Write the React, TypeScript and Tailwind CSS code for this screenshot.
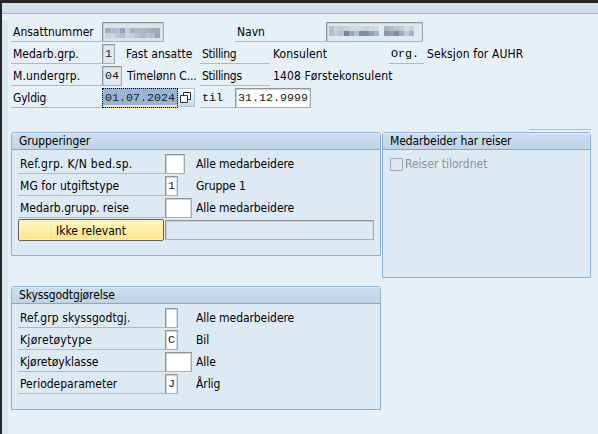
import React from 'react';

type Span = { text: string; className?: string };

const idMosaic = [
  ['#b3aaae', '#a9bbcd', '#b3c0d5', '#a29eb5', '#c1cfdb', '#b4acc2', '#a9bacb', '#b4b8b6', '#a5b3c3', '#9caabb', '#a3acbd'],
  ['#c8d4df', '#cbd8e3', '#bac9d7', '#b3bccd', '#c7d4e0', '#c3cfdc', '#b5c4d2', '#adb9c7', '#b8c4d2', '#b0bdcb', '#98a4b3'],
];

const nameMosaic = [
  ['#b7bcc9', '#c9d2dd', '#c0ccd9', '#c4d3e0', '#cdd9e5', '#cedbe6', '#ccd9e5', '#c3d1de', '#cbd7e1', '#ccdae5', '#dceaf4', '#b2b0bb', '#b2bccd', '#bec6d3', '#bfc9d7', '#d2dce6', '#c5d1e3'],
  ['#bbbfcc', '#c1cbd7', '#b6c1cd', '#7b8494', '#9ca9b5', '#b6bfca', '#7c8ba8', '#8b8c9b', '#929fb1', '#a8b4c1', '#dceaf4', '#948f99', '#929eaf', '#838b9b', '#a2aabb', '#c0ccd9', '#a5b1c7'],
];

function Mosaic({ rows }: { rows: string[][] }) {
  return (
    <div className="flex flex-col">
      {rows.map((row, i) => (
        <div key={i} className="flex">
          {row.map((color, j) => (
            <span key={j} className="w-[5px] h-[5px]" style={{ backgroundColor: color }} />
          ))}
        </div>
      ))}
    </div>
  );
}

function Label({ text, className = '' }: Span) {
  return (
    <div className={`h-[22px] shrink-0 border-b border-[#b4b8ba] pl-0.5 leading-[25px] whitespace-pre ${className}`}>
      <span>{text}</span>
    </div>
  );
}

function Field({ className = '', children }: { className?: string; children?: React.ReactNode }) {
  return (
    <div
      className={`h-5 shrink-0 self-end border border-t-[#929496] border-l-[#929496] border-r-[#a6a8aa] border-b-[#acaeb0] shadow-[inset_1px_1px_1px_#c9cdd1,inset_-1px_0_0_#dcdfe2] pl-0.5 font-['Liberation_Mono',monospace] text-[11.7px] leading-[19px] text-[#202020] ${className}`}
    >
      {children}
    </div>
  );
}

function Panel({ title, className = '', children }: { title: string; className?: string; children: React.ReactNode }) {
  return (
    <section className={`rounded-t-[3px] border border-[#8eb0d0] bg-[#deeaf3] ${className}`}>
      <h2 className="h-[17px] rounded-t-[2px] border-b border-[#86a8ca] bg-gradient-to-b from-[#cddeed] to-[#bed4e8] pl-[7px] leading-[16px] tracking-[-0.1px] shadow-[inset_0_1px_0_#e3eef7]">
        {title}
      </h2>
      {children}
    </section>
  );
}

type RowProps = { label: string; labelClass?: string; size: string; value?: string; text: string };

function PanelRow({ label, labelClass = '', size, value, text }: RowProps) {
  return (
    <div className="flex h-[22px] items-end">
      <Label text={label} className={`w-[147px] ${labelClass}`} />
      <div className="flex w-[31px] shrink-0">
        <Field className={`bg-white ${size}`}>{value}</Field>
      </div>
      <span className="h-[22px] leading-[25px] tracking-[-0.07px] whitespace-pre">{text}</span>
    </div>
  );
}

function App() {
  return (
    <div className="h-[434px] w-[598px] overflow-hidden border-t-[3px] border-l-2 border-[#252525] bg-[#e8f0f7] font-['DejaVu_Sans_Condensed','DejaVu_Sans',sans-serif] text-[12px] text-black">
      <header className="h-[11px] border-b border-[#a1b8cc] bg-[#d0dee8]" />
      <div className="flex h-[420px]">
        <div className="mt-1.5 w-1.5 shrink-0 bg-[#dce6ed]" />
        <main className="pl-[3px] pt-1.5">
          <div className="flex h-[22px]">
            <Label text="Ansattnummer" className="w-[91px]" />
            <Field className="w-[62px] bg-[#d9e5ee] pt-[5px]">
              <Mosaic rows={idMosaic} />
            </Field>
            <Label text="Navn" className="ml-[71px] w-[91px]" />
            <Field className="w-[97px] bg-[#dceaf4] pt-[3px]">
              <Mosaic rows={nameMosaic} />
            </Field>
          </div>
          <div className="flex h-[22px] leading-[25px]">
            <Label text="Medarb.grp." className="w-[91px]" />
            <Field className="w-[13px] bg-[#deeaf3]">1</Field>
            <span className="ml-[11px] w-[74px] tracking-[0.05px] whitespace-pre">Fast ansatte</span>
            <Label text="Stilling" className="w-[70px] tracking-[-0.3px]" />
            <span className="ml-[3px] w-[116px] tracking-[0.1px]">Konsulent</span>
            <Label text="Org." className="w-[35px] font-['Liberation_Mono',monospace] text-[11.7px]" />
            <span className="ml-[3px] tracking-[0.12px] whitespace-pre">Seksjon for AUHR</span>
          </div>
          <div className="flex h-[22px] leading-[25px]">
            <Label text="M.undergrp." className="w-[91px] tracking-[0.15px]" />
            <Field className="w-5 bg-[#deeaf3]">04</Field>
            <span className="ml-[5px] w-[73px] tracking-[-0.1px] whitespace-pre">Timelønn C...</span>
            <Label text="Stillings" className="w-[70px] tracking-[-0.3px]" />
            <span className="ml-[3px] tracking-[0.12px] whitespace-pre">1408 Førstekonsulent</span>
          </div>
          <div className="flex h-[22px]">
            <Label text="Gyldig" className="w-[91px] tracking-[-0.2px]" />
            <div className="h-5 w-[76px] self-end border border-dotted border-black bg-[#9ab4d3] pl-0.5 font-['Liberation_Mono',monospace] text-[11.7px] leading-[19px] text-[#202020] shadow-[inset_0_-2px_0_#fde9a0]">
              01.07.2024
            </div>
            <button className="mt-0.5 flex h-[19px] w-[17px] items-start border border-[#b2bdc8] border-l-[#dce5ec] bg-gradient-to-b from-white to-[#c8d9ec] pl-px pt-[3px]">
              <svg width="12" height="12" viewBox="0 0 12 12" fill="#fff" stroke="#303030">
                <path d="M3.5.5h7v7h-7z" />
                <path d="M.5 3.5h7v7h-7z" />
              </svg>
            </button>
            <Label text="til" className="ml-[5px] w-[35px] font-['Liberation_Mono',monospace] text-[11.7px]" />
            <Field className="w-[76px] bg-white">31.12.9999</Field>
          </div>
          <div className="mt-[21px] ml-[518px] h-px w-[62px] bg-[#b4b8ba]" />
          <div className="mt-0.5 flex items-start gap-px">
            <div className="flex w-[370px] flex-col gap-[30px]">
              <Panel title="Grupperinger" className="h-[124px]">
                <div className="pl-1.5 pt-0.5">
                  <PanelRow label="Ref.grp. K/N bed.sp." labelClass="tracking-[0.28px]" size="w-5" text="Alle medarbeidere" />
                  <PanelRow label="MG for utgiftstype" labelClass="tracking-[0.08px]" size="w-[13px]" value="1" text="Gruppe 1" />
                  <PanelRow label="Medarb.grupp. reise" size="w-[27px]" text="Alle medarbeidere" />
                  <div className="flex gap-px pt-px">
                    <button className="h-[22px] w-[146px] rounded-[2px] border border-[#5f6062] bg-gradient-to-b from-[#fff6c5] to-[#fee486] pt-px shadow-[inset_0_0_0_1px_#fff0ae]">
                      Ikke relevant
                    </button>
                    <Field className="mb-px w-[209px] bg-[#deeaf3]" />
                  </div>
                </div>
              </Panel>
              <Panel title="Skyssgodtgjørelse" className="h-[124px]">
                <div className="pl-1.5 pt-0.5">
                  <PanelRow label="Ref.grp skyssgodtgj." labelClass="tracking-[0.1px]" size="w-[13px]" text="Alle medarbeidere" />
                  <PanelRow label="Kjøretøytype" labelClass="tracking-[0.28px]" size="w-[13px]" value="C" text="Bil" />
                  <PanelRow label="Kjøretøyklasse" size="w-[27px]" text="Alle" />
                  <PanelRow label="Periodeparameter" size="w-[13px]" value="J" text="Årlig" />
                </div>
              </Panel>
            </div>
            <Panel title="Medarbeider har reiser" className="h-[146px] w-[209px]">
              <div className="flex items-center gap-0.5 pl-[7px] pt-[3px] leading-[22px] text-[#8c9197]">
                <span className="size-[13px] rounded-[1px] border border-[#a5a7aa]" />
                Reiser tilordnet
              </div>
            </Panel>
          </div>
        </main>
      </div>
    </div>
  );
}

export default App;
